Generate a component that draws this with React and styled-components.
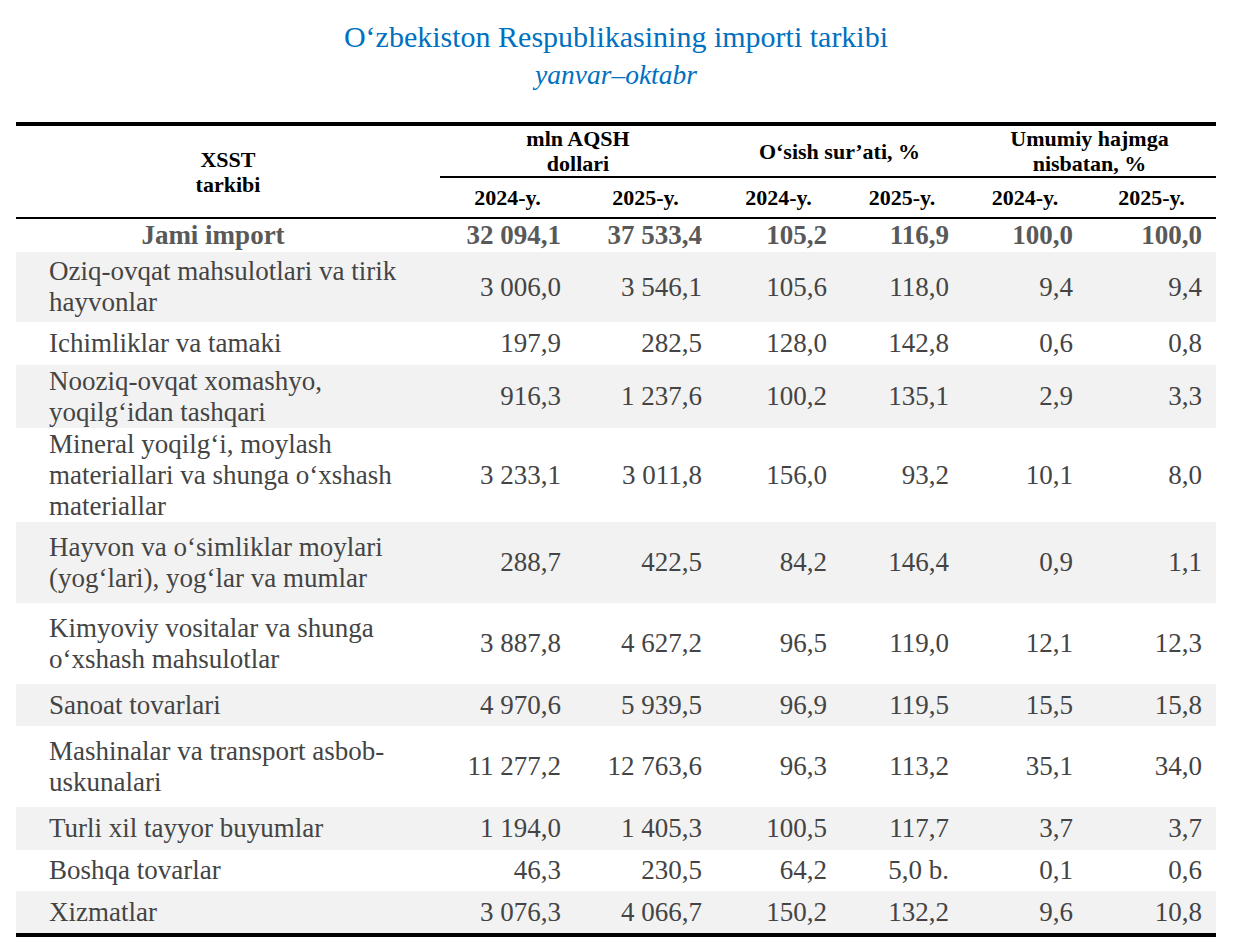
import React from "react";
import styled, { createGlobalStyle } from "styled-components";

const Global = createGlobalStyle`
  html, body { margin: 0; padding: 0; background: #ffffff; }
  body { font-family: "Liberation Serif", "Times New Roman", serif; }
`;

const COLS = "424px 135px 141px 125px 122px 124px 129px";

const Page = styled.div`
  width: 1234px;
  padding: 19px 0 0 16px;
  box-sizing: border-box;
`;

const TitleBlock = styled.header`
  width: 1200px;
  display: flex;
  flex-direction: column;
  align-items: center;
  color: #0070c0;
  margin-bottom: 29px;
`;

const Title = styled.h1`
  margin: 0;
  font-weight: normal;
  font-size: 30px;
  line-height: 36px;
`;

const Subtitle = styled.div`
  margin-top: 2px;
  font-style: italic;
  font-size: 27.5px;
  line-height: 36px;
`;

const Table = styled.div`
  width: 1200px;
  border-top: 4px solid #000;
  border-bottom: 4px solid #000;
`;

const Head = styled.div`
  display: grid;
  grid-template-columns: ${COLS};
  grid-template-rows: 52px 39px;
  border-bottom: 2px solid #000;
  font-weight: bold;
  font-size: 22px;
  line-height: 25px;
  color: #000;
`;

const StubHead = styled.div`
  grid-row: 1 / span 2;
  grid-column: 1;
  display: flex;
  align-items: center;
  justify-content: center;
  text-align: center;
  padding-top: 1px;
`;

const GroupHead = styled.div`
  grid-row: 1;
  grid-column: ${(p) => p.$col} / span 2;
  display: flex;
  align-items: center;
  justify-content: center;
  text-align: center;
  border-bottom: 2px solid #000;
`;

const YearHead = styled.div`
  grid-row: 2;
  display: flex;
  align-items: center;
  justify-content: center;
`;

const Row = styled.div`
  display: grid;
  grid-template-columns: ${COLS};
  height: ${(p) => p.$h}px;
  background: ${(p) => (p.$shade ? "#f2f2f2" : "#ffffff")};
  color: ${(p) => (p.$total ? "#595959" : "#444444")};
  font-weight: ${(p) => (p.$total ? "bold" : "normal")};
  font-size: 27px;
  line-height: 31px;
`;

const Label = styled.div`
  display: flex;
  flex-direction: column;
  justify-content: center;
  padding-left: 33px;
`;

const TotalLabel = styled.div`
  display: flex;
  align-items: center;
  justify-content: center;
  padding-right: 30px;
`;

const Num = styled.div`
  display: flex;
  align-items: center;
  justify-content: flex-end;
  padding-right: 14px;
  white-space: nowrap;
`;

const years = ["2024-y.", "2025-y.", "2024-y.", "2025-y.", "2024-y.", "2025-y."];

const rows = [
  { label: ["Oziq-ovqat mahsulotlari va tirik", "hayvonlar"], h: 70, v: ["3 006,0", "3 546,1", "105,6", "118,0", "9,4", "9,4"] },
  { label: ["Ichimliklar va tamaki"], h: 43, v: ["197,9", "282,5", "128,0", "142,8", "0,6", "0,8"] },
  { label: ["Nooziq-ovqat xomashyo,", "yoqilg‘idan tashqari"], h: 63, v: ["916,3", "1 237,6", "100,2", "135,1", "2,9", "3,3"] },
  { label: ["Mineral yoqilg‘i, moylash", "materiallari va shunga o‘xshash", "materiallar"], h: 94, v: ["3 233,1", "3 011,8", "156,0", "93,2", "10,1", "8,0"] },
  { label: ["Hayvon va o‘simliklar moylari", "(yog‘lari), yog‘lar va mumlar"], h: 81, v: ["288,7", "422,5", "84,2", "146,4", "0,9", "1,1"] },
  { label: ["Kimyoviy vositalar va shunga", "o‘xshash mahsulotlar"], h: 81, v: ["3 887,8", "4 627,2", "96,5", "119,0", "12,1", "12,3"] },
  { label: ["Sanoat tovarlari"], h: 42, v: ["4 970,6", "5 939,5", "96,9", "119,5", "15,5", "15,8"] },
  { label: ["Mashinalar va transport asbob-", "uskunalari"], h: 81, v: ["11 277,2", "12 763,6", "96,3", "113,2", "35,1", "34,0"] },
  { label: ["Turli xil tayyor buyumlar"], h: 43, v: ["1 194,0", "1 405,3", "100,5", "117,7", "3,7", "3,7"] },
  { label: ["Boshqa tovarlar"], h: 41, v: ["46,3", "230,5", "64,2", "5,0 b.", "0,1", "0,6"] },
  { label: ["Xizmatlar"], h: 42, v: ["3 076,3", "4 066,7", "150,2", "132,2", "9,6", "10,8"] },
];

const total = ["32 094,1", "37 533,4", "105,2", "116,9", "100,0", "100,0"];

export default function App() {
  return (
    <Page>
      <Global />
      <TitleBlock>
        <Title>O‘zbekiston Respublikasining importi tarkibi</Title>
        <Subtitle>yanvar–oktabr</Subtitle>
      </TitleBlock>
      <Table>
        <Head>
          <StubHead>
            XSST
            <br />
            tarkibi
          </StubHead>
          <GroupHead $col={2}>
            mln AQSH
            <br />
            dollari
          </GroupHead>
          <GroupHead $col={4}>O‘sish sur’ati, %</GroupHead>
          <GroupHead $col={6}>
            Umumiy hajmga
            <br />
            nisbatan, %
          </GroupHead>
          {years.map((y, i) => (
            <YearHead key={i}>{y}</YearHead>
          ))}
        </Head>
        <Row $h={33} $total>
          <TotalLabel>Jami import</TotalLabel>
          {total.map((v, i) => (
            <Num key={i}>{v}</Num>
          ))}
        </Row>
        {rows.map((r, ri) => (
          <Row key={ri} $h={r.h} $shade={ri % 2 === 0}>
            <Label>
              {r.label.map((l, li) => (
                <span key={li}>{l}</span>
              ))}
            </Label>
            {r.v.map((v, i) => (
              <Num key={i}>{v}</Num>
            ))}
          </Row>
        ))}
      </Table>
    </Page>
  );
}
